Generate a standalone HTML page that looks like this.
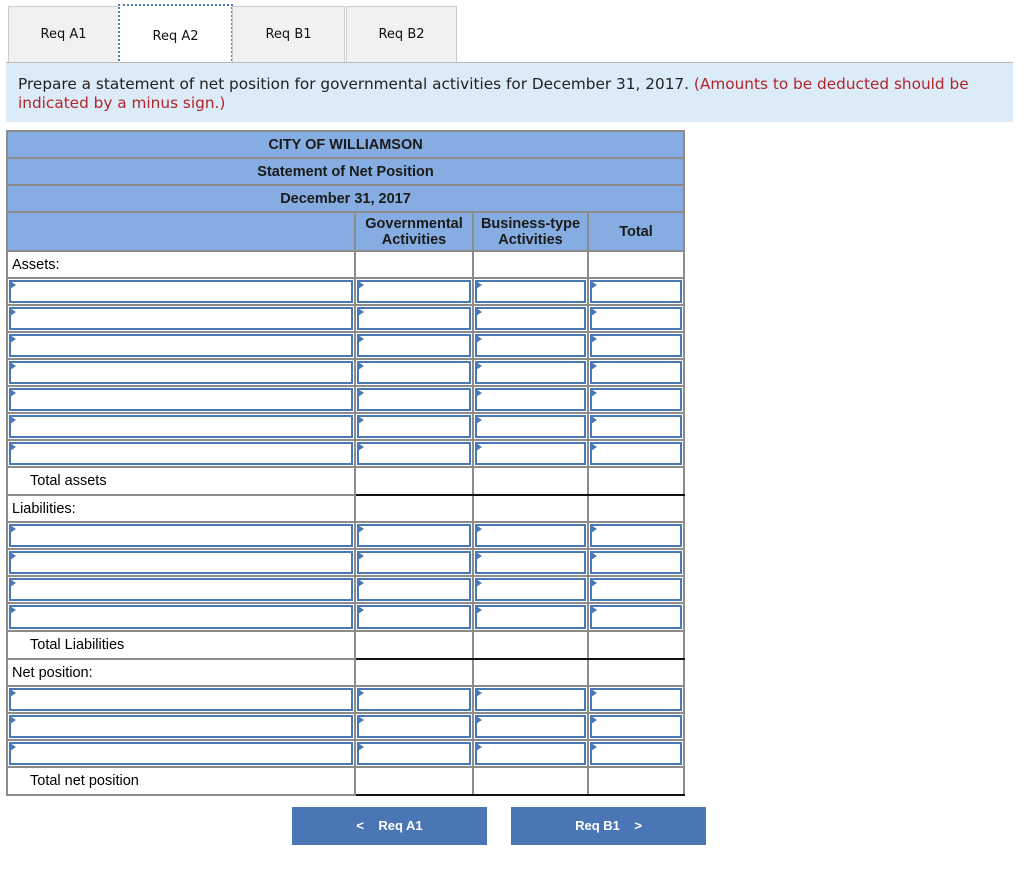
<!DOCTYPE html>
<html><head><style>
body{margin:0;width:1024px;height:883px;background:#fff;font-family:"Liberation Sans",Arial,sans-serif;position:relative;overflow:hidden}
.tab{position:absolute;top:6px;height:56px;background:#f1f1f1;border:1px solid #ccc;border-bottom:none;box-sizing:border-box;font-family:"DejaVu Sans",sans-serif;font-size:13px;text-align:center;line-height:56px;color:#111}
.tab.act{background:#fff;border:2px dotted #4a7ab8;top:4px;height:60px;line-height:62px}
.line{position:absolute;left:6px;width:1007px;top:62px;border-top:1px solid #bbb}
.instr{position:absolute;left:6px;top:63px;width:1007px;height:59px;background:#dcebf8;box-sizing:border-box;padding:12px 30px 0 12px;font-family:"DejaVu Sans",sans-serif;font-size:15.3px;line-height:19px;color:#222}
.instr span{color:#b0262a}
table{position:absolute;left:6px;top:130px;border-collapse:collapse;width:677px;table-layout:fixed;font-size:14.5px}
td{border:2px solid #8c8c8c;padding:0;height:23px;box-sizing:border-box}
.h{background:#85ade2;text-align:center;font-weight:bold;color:#1a1a1a;font-size:14.5px;height:27px}
.hh{background:#85ade2;text-align:center;font-weight:bold;color:#1a1a1a;font-size:14.5px;line-height:16px;height:39px}
.r td{height:27px}
.r2 td{height:28px}
.lab{padding-left:4px}
.ind{padding-left:22px}
.in{position:relative;padding:0}
.in div{position:absolute;left:1px;right:1px;top:1px;bottom:1px;border:2px solid #4a78b4;background:#fff}
.in div:before{content:"";position:absolute;left:-1px;top:-1px;border-left:6px solid #4a78b4;border-top:4px solid transparent;border-bottom:4px solid transparent}
.tot{border-bottom:2px solid #111}
.btn{position:absolute;top:807px;height:38px;width:195px;background:#4a76b6;color:#fff;font-weight:bold;font-size:13px;line-height:38px;text-align:center}
</style></head><body>
<div class="tab" style="left:8px;width:111px">Req A1</div>
<div class="tab act" style="left:118px;width:115px">Req A2</div>
<div class="tab" style="left:232px;width:113px">Req B1</div>
<div class="tab" style="left:346px;width:111px">Req B2</div>
<div class="line"></div>
<div class="instr">Prepare a statement of net position for governmental activities for December 31, 2017. <span>(Amounts to be deducted should be indicated by a minus sign.)</span></div>
<table>
<colgroup><col style="width:348px"><col style="width:118px"><col style="width:115px"><col style="width:96px"></colgroup>
<tr><td colspan="4" class="h">CITY OF WILLIAMSON</td></tr>
<tr><td colspan="4" class="h">Statement of Net Position</td></tr>
<tr><td colspan="4" class="h">December 31, 2017</td></tr>
<tr><td class="hh"></td><td class="hh">Governmental<br>Activities</td><td class="hh">Business-type<br>Activities</td><td class="hh">Total</td></tr>
<tr class="r"><td class="lab">Assets:</td><td></td><td></td><td></td></tr>
<tr class="r"><td class="in"><div></div></td><td class="in"><div></div></td><td class="in"><div></div></td><td class="in"><div></div></td></tr>
<tr class="r"><td class="in"><div></div></td><td class="in"><div></div></td><td class="in"><div></div></td><td class="in"><div></div></td></tr>
<tr class="r"><td class="in"><div></div></td><td class="in"><div></div></td><td class="in"><div></div></td><td class="in"><div></div></td></tr>
<tr class="r"><td class="in"><div></div></td><td class="in"><div></div></td><td class="in"><div></div></td><td class="in"><div></div></td></tr>
<tr class="r"><td class="in"><div></div></td><td class="in"><div></div></td><td class="in"><div></div></td><td class="in"><div></div></td></tr>
<tr class="r"><td class="in"><div></div></td><td class="in"><div></div></td><td class="in"><div></div></td><td class="in"><div></div></td></tr>
<tr class="r"><td class="in"><div></div></td><td class="in"><div></div></td><td class="in"><div></div></td><td class="in"><div></div></td></tr>
<tr class="r2"><td class="ind">Total assets</td><td class="tot"></td><td class="tot"></td><td class="tot"></td></tr>
<tr class="r"><td class="lab">Liabilities:</td><td></td><td></td><td></td></tr>
<tr class="r"><td class="in"><div></div></td><td class="in"><div></div></td><td class="in"><div></div></td><td class="in"><div></div></td></tr>
<tr class="r"><td class="in"><div></div></td><td class="in"><div></div></td><td class="in"><div></div></td><td class="in"><div></div></td></tr>
<tr class="r"><td class="in"><div></div></td><td class="in"><div></div></td><td class="in"><div></div></td><td class="in"><div></div></td></tr>
<tr class="r2"><td class="in"><div></div></td><td class="in"><div></div></td><td class="in"><div></div></td><td class="in"><div></div></td></tr>
<tr class="r2"><td class="ind">Total Liabilities</td><td class="tot"></td><td class="tot"></td><td class="tot"></td></tr>
<tr class="r"><td class="lab">Net position:</td><td></td><td></td><td></td></tr>
<tr class="r"><td class="in"><div></div></td><td class="in"><div></div></td><td class="in"><div></div></td><td class="in"><div></div></td></tr>
<tr class="r"><td class="in"><div></div></td><td class="in"><div></div></td><td class="in"><div></div></td><td class="in"><div></div></td></tr>
<tr class="r"><td class="in"><div></div></td><td class="in"><div></div></td><td class="in"><div></div></td><td class="in"><div></div></td></tr>
<tr class="r2"><td class="ind">Total net position</td><td class="tot"></td><td class="tot"></td><td class="tot"></td></tr>
</table>
<div class="btn" style="left:292px">&lt;&nbsp;&nbsp;&nbsp;&nbsp;Req A1</div>
<div class="btn" style="left:511px">Req B1&nbsp;&nbsp;&nbsp;&nbsp;&gt;</div>
</body></html>
